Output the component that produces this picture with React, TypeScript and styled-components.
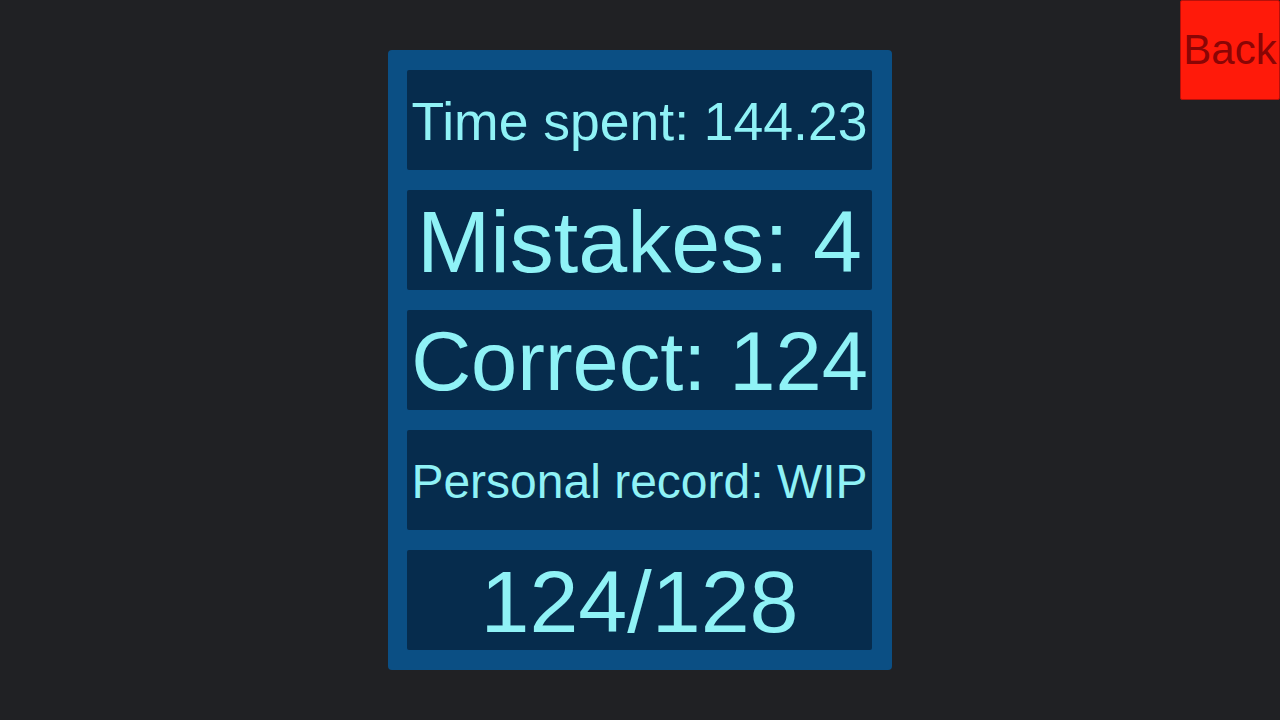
import React from 'react'
import styled, { createGlobalStyle } from 'styled-components'

const GlobalStyle = createGlobalStyle`
  html, body {
    margin: 0;
    padding: 0;
    height: 100%;
    background: #202124;
    font-family: 'Liberation Sans', Arial, sans-serif;
  }
  #root {
    height: 100%;
  }
`

type Stat = {
  label: string
  size: number
}

const stats: Stat[] = [
  { label: 'Time spent: 144.23', size: 53.5 },
  { label: 'Mistakes: 4', size: 88 },
  { label: 'Correct: 124', size: 83 },
  { label: 'Personal record: WIP', size: 48 },
  { label: '124/128', size: 88 },
]

export const App: React.FC = () => {
  return (
    <Page>
      <GlobalStyle />
      <BackButton type="button">Back</BackButton>
      <Panel>
        {stats.map((s) => (
          <StatBox key={s.label}>
            <StatText size={s.size}>{s.label}</StatText>
          </StatBox>
        ))}
      </Panel>
    </Page>
  )
}

const Page = styled.div`
  position: relative;
  min-height: 720px;
  display: flex;
  justify-content: center;
  align-items: flex-start;
  padding-top: 50px;
  box-sizing: border-box;
`

const Panel = styled.div`
  width: 504px;
  box-sizing: border-box;
  padding: 20px 20px 20px 19px;
  background: #0b4f84;
  border-radius: 4px;
  display: flex;
  flex-direction: column;
  gap: 20px;
`

const StatBox = styled.div`
  height: 100px;
  box-sizing: border-box;
  padding-top: 3px;
  background: #062c4d;
  border-radius: 2px;
  display: flex;
  align-items: center;
  justify-content: center;
  overflow: hidden;
`

const StatText = styled.span<{ size: number }>`
  color: #8ff2f6;
  font-size: ${(p) => p.size}px;
  line-height: 1;
  white-space: nowrap;
`

const BackButton = styled.button`
  position: absolute;
  top: 0;
  right: 0;
  width: 100px;
  height: 100px;
  padding: 0;
  box-sizing: border-box;
  background: #ff1a0a;
  border: 1px solid #b8100a;
  border-radius: 2px;
  color: #8a0505;
  font-family: 'Liberation Sans', Arial, sans-serif;
  font-size: 42px;
  white-space: nowrap;
  overflow: hidden;
  display: flex;
  align-items: center;
  justify-content: center;
  cursor: pointer;
`

export default App
